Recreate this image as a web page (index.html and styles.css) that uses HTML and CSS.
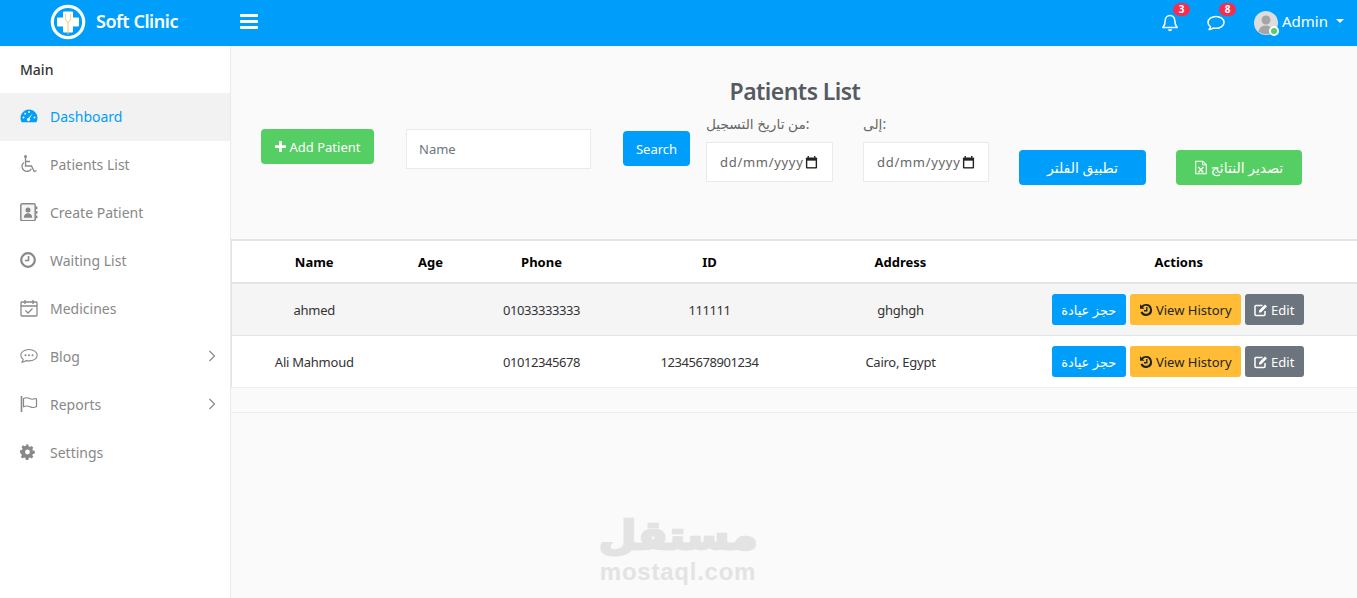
FILE: index.html
```html
<!DOCTYPE html>
<html lang="en">
<head>
<meta charset="utf-8">
<title>Soft Clinic</title>
<link rel="stylesheet" href="styles.css">
</head>
<body>
<header class="topbar">
  <div class="brand">
    <svg class="logo" viewBox="0 0 36 36"><circle cx="18" cy="18" r="15.700" fill="none" stroke="#fff" stroke-width="3.200"/><path d="M14 7.500h8a1 1 0 0 1 1 1V13.500h5a1 1 0 0 1 1 1v7a1 1 0 0 1-1 1H23v5a1 1 0 0 1-1 1h-8a1 1 0 0 1-1-1v-5H8a1 1 0 0 1-1-1v-7a1 1 0 0 1 1-1h5V8.500a1 1 0 0 1 1-1z" fill="#fff"/><path d="M15.500 10c-.5 5 .5 8 2.500 8s3-3 2.500-8M18 18v13" fill="none" stroke="#f7c35f" stroke-width=".9"/></svg>
    <span class="brand-name">Soft Clinic</span>
  </div>
  <button class="burger" aria-label="Menu"><span></span><span></span><span></span></button>
  <div class="top-right">
    <div class="top-icon">
      <svg viewBox="0 0 20 20" class="top-svg"><path d="M10 2.500c-3 0-4.800 2.300-4.800 5.200 0 4-1.200 5.500-2.400 6.800h14.400c-1.200-1.300-2.400-2.800-2.400-6.800 0-2.900-1.800-5.200-4.800-5.200z" fill="none" stroke="#fff" stroke-width="1.500" stroke-linejoin="round"/><path d="M8 16.300a2 2 0 0 0 4 0z" fill="#fff"/></svg>
      <span class="badge">3</span>
    </div>
    <div class="top-icon">
      <svg viewBox="0 0 20 20" class="top-svg"><path d="M10 3.500c-4.400 0-8 2.600-8 5.900 0 1.700 1 3.200 2.500 4.300-.2 1.200-.8 2.100-1.500 2.900 1.600-.1 3.200-.7 4.300-1.600.9.200 1.800.3 2.700.3 4.400 0 8-2.600 8-5.900s-3.600-5.900-8-5.900z" fill="none" stroke="#fff" stroke-width="1.500" stroke-linejoin="round"/></svg>
      <span class="badge">8</span>
    </div>
    <div class="user">
      <div class="avatar">
        <svg viewBox="0 0 24 24"><circle cx="12" cy="12" r="12" fill="#ddd"/><circle cx="12" cy="9" r="4.500" fill="#a5a5a5"/><path d="M4.500 20.500c.8-4 3.800-6 7.500-6s6.700 2 7.500 6a12 12 0 0 1-15 0z" fill="#a5a5a5"/></svg>
        <span class="online"></span>
      </div>
      <span class="user-name">Admin</span>
      <span class="caret"></span>
    </div>
  </div>
</header>

<div class="layout">
  <aside class="sidebar">
    <div class="menu-title">Main</div>
    <nav>
      <a class="menu-item active">
        <svg class="mi" viewBox="0 0 18 18"><path d="M9 2.500a8.500 8.500 0 0 0-8.500 8.500c0 1.500.4 3 1.100 4.200h14.800c.7-1.200 1.100-2.700 1.100-4.200A8.500 8.500 0 0 0 9 2.500z" fill="currentColor"/><g fill="#f2f2f2"><circle cx="3.500" cy="10.500" r="1"/><circle cx="5.200" cy="6.800" r="1"/><circle cx="9" cy="5" r="1"/><circle cx="14.500" cy="10.500" r="1"/></g><path d="M12.800 6.300 9.700 11.500a1.600 1.600 0 1 1-1.300-.5z" fill="#f2f2f2"/></svg>
        <span>Dashboard</span>
      </a>
      <a class="menu-item">
        <svg class="mi" viewBox="0 0 18 18" fill="none" stroke="currentColor" stroke-width="1.300"><circle cx="5.500" cy="1.600" r="1.500" fill="currentColor" stroke="none"/><path d="M5.500 3v8h6l2.700 5.500 2.300-.8M5.500 6.500H10"/><path d="M3.800 7.500a5 5 0 1 0 7.600 6.200"/></svg>
        <span>Patients List</span>
      </a>
      <a class="menu-item">
        <svg class="mi" viewBox="0 0 18 18"><rect x=".8" y=".8" width="14.400" height="17" rx="1.500" fill="#f4f4f4" stroke="currentColor" stroke-width="1.500"/><circle cx="8" cy="7" r="2.500" fill="currentColor"/><path d="M3.800 14.800c0-3 1.800-4.500 4.200-4.500s4.200 1.500 4.200 4.500z" fill="currentColor"/><path d="M16.700 3.500v2.800M16.700 8v2.800M16.700 12.500v2.800" stroke="currentColor" stroke-width="1.500"/></svg>
        <span>Create Patient</span>
      </a>
      <a class="menu-item">
        <svg class="mi" viewBox="0 0 18 18" fill="none" stroke="currentColor"><circle cx="8" cy="9" r="6.800" stroke-width="2.200"/><path d="M8.500 5v4.500H5" stroke-width="1.600"/></svg>
        <span>Waiting List</span>
      </a>
      <a class="menu-item">
        <svg class="mi" viewBox="0 0 18 18" fill="none" stroke="currentColor" stroke-width="1.300"><rect x="1" y="3" width="16" height="14" rx="1"/><path d="M1 7h16M5 1v4M13 1v4" /><path d="M5.500 11.500 8 14l4.500-4.500"/></svg>
        <span>Medicines</span>
      </a>
      <a class="menu-item">
        <svg class="mi" viewBox="0 0 18 18" fill="none" stroke="currentColor" stroke-width="1.100"><path d="M9 2.500C4.600 2.500.8 5 .8 8.300c0 1.700 1 3.100 2.400 4.100-.1 1.300-.8 2.200-1.300 2.900 1.700-.2 3-.8 4-1.700.9.200 2 .3 3.100.3 4.400 0 8.200-2.300 8.200-5.600S13.400 2.500 9 2.500z"/><g fill="currentColor" stroke="none"><circle cx="5.500" cy="8.300" r="1"/><circle cx="9" cy="8.300" r="1"/><circle cx="12.500" cy="8.300" r="1"/></g></svg>
        <span>Blog</span>
        <svg class="chev" viewBox="0 0 8 12"><path d="M1.500 1 6.500 6l-5 5" fill="none" stroke="currentColor" stroke-width="1.200"/></svg>
      </a>
      <a class="menu-item">
        <svg class="mi" viewBox="0 0 18 18" fill="none" stroke="currentColor" stroke-width="1.200"><path d="M1.500 1v16" stroke-width="1.600"/><path d="M3.500 3.500c2-1 4-1 6 0s4 1 6 0c.5 0 1 .2 1 .7v7.300c-2 1.200-4.500 1.200-6.500.2s-4-1-6.500 0z"/></svg>
        <span>Reports</span>
        <svg class="chev" viewBox="0 0 8 12"><path d="M1.500 1 6.500 6l-5 5" fill="none" stroke="currentColor" stroke-width="1.200"/></svg>
      </a>
      <a class="menu-item">
        <svg class="mi" viewBox="0 0 18 18"><path d="M7.500 1h3l.5 2.300 1.500.7 2-1.200 2 2-1.200 2 .7 1.500 2.300.5v3l-2.300.5-.7 1.500 1.200 2-2 2-2-1.200-1.500.7-.5 2.300h-3l-.5-2.300-1.500-.7-2 1.200-2-2 1.200-2-.7-1.500L.5 11V8l2.300-.5.7-1.500-1.200-2 2-2 2 1.200 1.500-.7z" transform="translate(-.385 .7) scale(.83)" fill="currentColor"/><circle cx="7.500" cy="9" r="2.400" fill="#fff"/></svg>
        <span>Settings</span>
      </a>
    </nav>
  </aside>

  <main class="content">
    <h1 class="page-title">Patients List</h1>
    <div class="filters">
      <button class="btn btn-green add-btn"><svg class="ic-plus" viewBox="0 0 12 12"><path d="M4.500 0h3v4.500H12v3H7.500V12h-3V7.500H0v-3h4.500z" fill="#fff"/></svg> Add Patient</button>
      <input class="field name-field" type="text" placeholder="Name">
      <button class="btn btn-blue search-btn">Search</button>
      <div class="date-group">
        <label class="date-label">من تاريخ التسجيل:</label>
        <div class="field date-field"><span>dd/mm/yyyy</span><svg class="cal" viewBox="0 0 14 14"><path d="M3.500 0v2M10.500 0v2" stroke="#222" stroke-width="1.500"/><rect x="1" y="1.500" width="12" height="12" rx="1" fill="#222"/><rect x="2.500" y="5" width="9" height="7" fill="#fff"/></svg></div>
      </div>
      <div class="date-group to-group">
        <label class="date-label">إلى:</label>
        <div class="field date-field"><span>dd/mm/yyyy</span><svg class="cal" viewBox="0 0 14 14"><path d="M3.500 0v2M10.500 0v2" stroke="#222" stroke-width="1.500"/><rect x="1" y="1.500" width="12" height="12" rx="1" fill="#222"/><rect x="2.500" y="5" width="9" height="7" fill="#fff"/></svg></div>
      </div>
      <button class="btn btn-blue wide-btn" dir="rtl">تطبيق الفلتر</button>
      <button class="btn btn-green wide-btn export-btn" dir="rtl">تصدير النتائج <svg class="ic-xls" viewBox="0 0 12 14"><path d="M.7.700h7l3.600 3.500v9.100H.7z" fill="none" stroke="#fff" stroke-width="1.100"/><path d="M7.500.700v3.700h3.800" fill="none" stroke="#fff"/><path d="M3.300 6.500 8.300 12M8.300 6.500 3.300 12" stroke="#fff" stroke-width="1.400"/></svg></button>
    </div>

    <table class="patients">
      <colgroup><col class="c-name"><col class="c-age"><col class="c-phone"><col class="c-id"><col class="c-addr"><col class="c-act"></colgroup>
      <thead>
        <tr><th>Name</th><th>Age</th><th>Phone</th><th>ID</th><th>Address</th><th>Actions</th></tr>
      </thead>
      <tbody>
        <tr class="shaded">
          <td class="cell">ahmed</td><td class="cell"></td><td class="cell num">01033333333</td><td class="cell num">111111</td><td class="cell">ghghgh</td>
          <td><div class="actions">
            <button class="mini mini-blue">حجز عيادة</button>
            <button class="mini mini-yellow"><svg class="ic" viewBox="0 0 14 14"><path d="M7 1a6 6 0 1 1-5.500 8.300l1.900-.7A4 4 0 1 0 4 4.200L5.500 5.700H1V1.200l1.500 1.500A6 6 0 0 1 7 1z" fill="#212529"/><path d="M7.800 4v3.800H5" fill="none" stroke="#212529" stroke-width="1.400"/></svg> View History</button>
            <button class="mini mini-grey"><svg class="ic" viewBox="0 0 14 14"><path d="M11 8v3.500a1 1 0 0 1-1 1H2a1 1 0 0 1-1-1v-8a1 1 0 0 1 1-1h6.500" fill="none" stroke="#fff" stroke-width="1.500"/><path d="M5 7.500 11 1.500l2 2-6 6H5z" fill="#fff"/></svg> Edit</button>
          </div></td>
        </tr>
        <tr>
          <td class="cell">Ali Mahmoud</td><td class="cell"></td><td class="cell num">01012345678</td><td class="cell num">12345678901234</td><td class="cell">Cairo, Egypt</td>
          <td><div class="actions">
            <button class="mini mini-blue">حجز عيادة</button>
            <button class="mini mini-yellow"><svg class="ic" viewBox="0 0 14 14"><path d="M7 1a6 6 0 1 1-5.500 8.300l1.900-.7A4 4 0 1 0 4 4.200L5.500 5.700H1V1.200l1.500 1.500A6 6 0 0 1 7 1z" fill="#212529"/><path d="M7.800 4v3.800H5" fill="none" stroke="#212529" stroke-width="1.400"/></svg> View History</button>
            <button class="mini mini-grey"><svg class="ic" viewBox="0 0 14 14"><path d="M11 8v3.500a1 1 0 0 1-1 1H2a1 1 0 0 1-1-1v-8a1 1 0 0 1 1-1h6.500" fill="none" stroke="#fff" stroke-width="1.500"/><path d="M5 7.500 11 1.500l2 2-6 6H5z" fill="#fff"/></svg> Edit</button>
          </div></td>
        </tr>
      </tbody>
    </table>
    <div class="table-foot"></div>

    <div class="watermark">
      <div class="wm-ar"><span class="wm-ar-text">مستقل</span></div>
      <div class="wm-en">mostaql.com</div>
    </div>
  </main>
</div>
</body>
</html>
```

FILE: styles.css
```css
* { box-sizing: border-box; }
html, body { height: 100%; }
body {
  margin: 0;
  overflow: hidden;
  font-family: "Noto Sans", "DejaVu Sans", sans-serif;
  font-size: 14px;
  color: #6c757d;
  background: #fafafa;
}
button { font-family: inherit; cursor: pointer; }

.topbar {
  height: 46px;
  padding-bottom: 3px;
  background: #009efb;
  display: flex;
  align-items: center;
  color: #fff;
}
.brand { width: 230px; display: flex; align-items: center; padding-left: 50px; flex: none; }
.logo { width: 36px; height: 36px; }
.brand-name { margin-left: 10px; font-size: 18px; font-weight: 600; letter-spacing: -.45px; margin-bottom: 1px; }
.burger { background: none; border: 0; padding: 0; margin-left: 10px; width: 18px; display: flex; flex-direction: column; gap: 3px; }
.burger span { display: block; height: 3px; background: #fff; border-radius: 1px; }
.top-right { margin-left: auto; display: flex; align-items: center; padding-right: 13px; }
.top-icon { position: relative; width: 20px; height: 20px; margin: 3px 26px 0 0; }
.top-svg { width: 20px; height: 20px; display: block; }
.badge {
  position: absolute; top: -10px; left: 13px;
  width: 17px; height: 13px; border-radius: 7px;
  background: #f62d51; color: #fff;
  font-size: 10px; font-weight: 700; line-height: 13px; text-align: center;
}
.user { display: flex; align-items: center; margin-left: 2px; }
.avatar { position: relative; width: 24px; height: 24px; margin-top: 2px; }
.avatar svg { width: 24px; height: 24px; display: block; }
.online {
  position: absolute; right: -1px; bottom: -1px;
  width: 10px; height: 10px; border-radius: 50%;
  background: #55ce63; border: 2px solid #fff;
}
.user-name { margin: 0 0 2px 4px; font-size: 15px; }
.caret { margin: 0 0 2px 8px; border: 4px solid transparent; border-top-color: #fff; border-bottom: 0; }

.layout { display: flex; height: 552px; }
.sidebar { width: 231px; flex: none; background: #fff; border-right: 1px solid #eaeaea; }
.menu-title { height: 47px; padding: 14px 0 0 20px; font-size: 14px; font-weight: 500; color: #333; }
.menu-item { height: 48px; display: flex; align-items: center; padding: 0 14px 2px 20px; color: #888; font-size: 14px; }
.menu-item.active { background: #f2f2f2; color: #009efb; }
.mi { width: 18px; height: 18px; flex: none; margin-right: 12px; }
.chev { width: 8px; height: 12px; margin-left: auto; }

.content { flex: 1; min-width: 0; position: relative; }
.page-title { margin: 0; padding: 29px 0 0 2px; height: 69px; text-align: center; font-size: 23px; line-height: 32px; font-weight: 600; color: #565a63; letter-spacing: -.55px; }
.filters { display: flex; align-items: flex-start; padding-left: 30px; height: 124px; }
.btn { border: 1px solid transparent; border-radius: 4px; color: #fff; font-size: 13px; }
.btn-green { background: #55ce63; }
.btn-blue { background: #009efb; }
.add-btn { width: 113px; height: 35px; margin: 14px 32px 0 0; padding: 0; display: flex; align-items: center; justify-content: center; gap: 4px; }
.ic-plus { width: 11px; height: 11px; }
.field { background: #fff; border: 1px solid #eaeaea; color: #666; font-size: 13px; height: 40px; }
.name-field { width: 185px; margin: 14px 32px 0 0; padding: 0 12px; font-family: inherit; outline: 0; }
.name-field::placeholder { color: #6c757d; opacity: 1; }
.search-btn { width: 67px; height: 35px; margin: 16px 16px 0 0; padding: 0; }
.date-group { width: 127px; margin-right: 30px; flex: none; }
.to-group { width: 126px; }
.date-label { display: block; height: 18px; margin-bottom: 9px; font-size: 13.7px; line-height: 18px; color: #666; white-space: nowrap; }
.date-field { display: flex; align-items: center; padding-left: 13px; letter-spacing: .7px; }
.cal { width: 13px; height: 13px; margin-left: 1px; flex: none; }
.wide-btn { width: 127px; height: 35px; margin: 35px 30px 0 0; padding: 0; font-size: 14px; }
.export-btn { width: 126px; margin-right: 0; display: flex; align-items: center; justify-content: center; gap: 4px; }
.ic-xls { width: 12px; height: 15px; }

.patients { width: 100%; table-layout: fixed; border-collapse: collapse; background: #fff; font-size: 13px; color: #333; letter-spacing: -.25px; }
.c-name { width: 165px; } .c-age { width: 68px; } .c-phone { width: 154px; } .c-id { width: 182px; } .c-addr { width: 200px; }
.patients th { height: 43px; border-top: 2px solid #e3e4e8; border-bottom: 2px solid #e3e4e8; color: #000; font-weight: 700; text-align: center; padding: 0; letter-spacing: 0; }
.patients td { height: 52px; border-bottom: 1px solid #e3e4e8; text-align: center; padding: 0; }
.patients td.cell { padding-top: 2px; }
.patients th:first-child, .patients td:first-child { border-left: 1px solid #e3e4e8; }
.patients td.num { letter-spacing: -.45px; }
.patients tbody tr:last-child td { border-bottom-color: #eee; }
.shaded { background: #f5f5f5; }
.actions { display: flex; justify-content: center; gap: 4px; padding-right: 2px; letter-spacing: 0; }
.mini { height: 31px; border: 0; border-radius: 3px; font-size: 13px; padding: 1px 0 0; display: flex; align-items: center; justify-content: center; gap: 3px; }
.mini-blue { width: 74px; background: #009efb; color: #fff; }
.mini-yellow { width: 111px; background: #ffbc34; color: #212529; }
.mini-grey { width: 59px; background: #6c757d; color: #fff; }
.ic { width: 14px; height: 14px; }
.table-foot { height: 25px; border-bottom: 1px solid #eee; }

.watermark { position: absolute; left: 368px; top: 465px; width: 158px; text-align: center; color: #e3e3e3; }
.wm-ar { font-family: "DejaVu Sans", sans-serif; font-weight: 700; font-size: 39.5px; line-height: 48px; white-space: nowrap; }
.wm-ar-text { display: inline-block; transform: scaleX(1.1); -webkit-text-stroke: 2.5px #e3e3e3; }
.wm-en { font-family: "Liberation Sans", sans-serif; font-weight: 700; font-size: 24px; line-height: 26px; letter-spacing: .75px; }
```
